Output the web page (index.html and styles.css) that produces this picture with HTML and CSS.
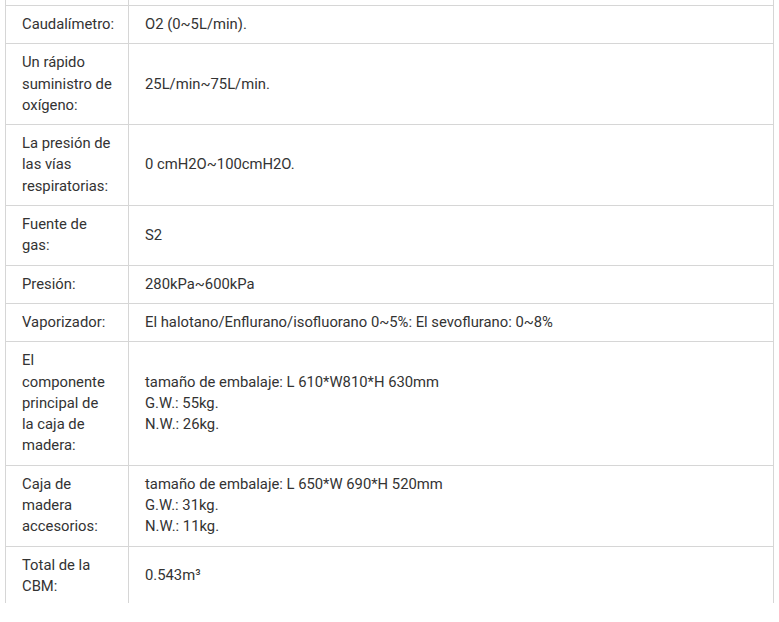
FILE: index.html
```html
<!DOCTYPE html>
<html lang="es">
<head>
<meta charset="utf-8">
<link rel="stylesheet" href="styles.css">
</head>
<body>
<div class="page">
<table class="spec">
  <colgroup><col class="c-label"><col class="c-value"></colgroup>
  <tbody>
    <tr class="stub"><td></td><td></td></tr>
    <tr><td>Caudalímetro:</td><td>O2 (0~5L/min).</td></tr>
    <tr><td>Un rápido suministro de oxígeno:</td><td>25L/min~75L/min.</td></tr>
    <tr><td>La presión de las vías respiratorias:</td><td>0 cmH2O~100cmH2O.</td></tr>
    <tr><td>Fuente de gas:</td><td>S2</td></tr>
    <tr><td>Presión:</td><td>280kPa~600kPa</td></tr>
    <tr><td>Vaporizador:</td><td>El halotano/Enflurano/isofluorano 0~5%: El sevoflurano: 0~8%</td></tr>
    <tr><td>El componente principal de la caja de madera:</td><td>tamaño de embalaje: L 610*W810*H 630mm<br>G.W.: 55kg.<br>N.W.: 26kg.</td></tr>
    <tr><td>Caja de madera accesorios:</td><td>tamaño de embalaje: L 650*W 690*H 520mm<br>G.W.: 31kg.<br>N.W.: 11kg.</td></tr>
    <tr class="last"><td>Total de la CBM:</td><td>0.543m³</td></tr>
  </tbody>
</table>
</div>
</body>
</html>
```

FILE: styles.css
```css
html, body {
  margin: 0;
  padding: 0;
  background: #fff;
}
.page {
  padding: 0 5px 0 5px;
  height: 622px;
  overflow: hidden;
}
.spec {
  width: 769px;
  border-collapse: collapse;
  table-layout: fixed;
  font-family: Roboto, "Liberation Sans", sans-serif;
  font-size: 14.8px;
  line-height: 21.3px;
  color: #333;
}
.c-label { width: 123px; }
.spec td {
  border: 1px solid #d6d6d6;
  padding: 8px 16px;
  vertical-align: middle;
  text-align: left;
}
.spec tr.stub td {
  height: 5px;
  padding: 0;
  border-top: none;
}
.spec tr.last td {
  border-bottom: none;
  padding-bottom: 6px;
}
```
